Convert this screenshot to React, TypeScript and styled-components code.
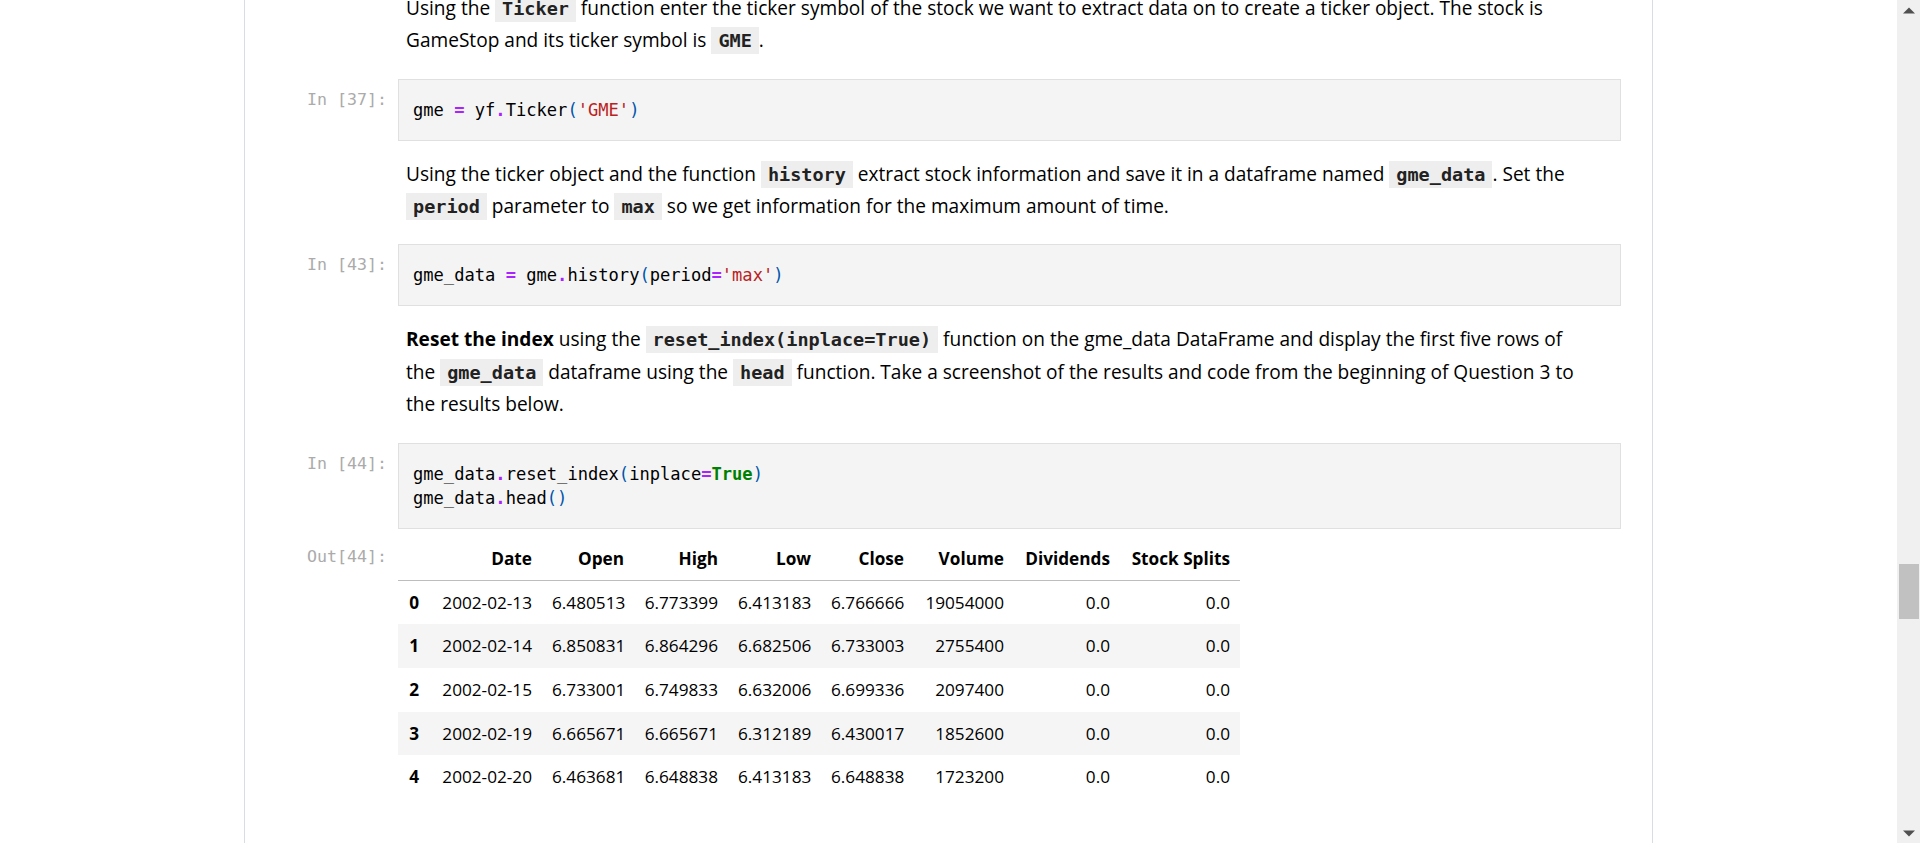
import React from "react";
import styled, { createGlobalStyle } from "styled-components";

const GlobalStyle = createGlobalStyle`
  html, body {
    margin: 0;
    padding: 0;
    height: 100%;
    overflow: hidden;
    background: #ffffff;
  }
  #root { height: 100%; }
`;

const TEXT_FONT = `"Open Sans", "Noto Sans", sans-serif`;
const MONO_FONT = `"DejaVu Sans Mono", "Liberation Mono", monospace`;

const Window = styled.div`
  display: flex;
  width: 100vw;
  height: 100vh;
  overflow: hidden;
`;

const Viewport = styled.div`
  flex: 1;
  min-width: 0;
  display: flex;
  justify-content: center;
  overflow: hidden;
`;

const Notebook = styled.div`
  width: 1409px;
  flex: none;
  box-sizing: border-box;
  border-left: 1px solid #d8dde3;
  border-right: 1px solid #d8dde3;
  padding-right: 31px;
  height: 100%;
`;

const CellList = styled.div<{ $offset: number }>`
  display: flex;
  flex-direction: column;
  margin-top: ${(p) => -p.$offset}px;
`;

const Cell = styled.div<{ $flushTop?: boolean }>`
  display: grid;
  grid-template-columns: 153px 1fr;
  padding: ${(p) => (p.$flushTop ? "0" : "8.5px")} 0 8.5px 0;
`;

const Prompt = styled.div<{ $top: number }>`
  font-family: ${MONO_FONT};
  font-size: 16.6px;
  line-height: 24px;
  color: #ababab;
  text-align: right;
  padding: ${(p) => p.$top}px 11px 0 0;
  white-space: pre;
`;

const Markdown = styled.div`
  font-family: ${TEXT_FONT};
  font-size: 19.1px;
  line-height: 32.4px;
  color: #000;
  padding: 0 8px 5px 8px;
`;

const Para = styled.p`
  margin: 0;
  white-space: nowrap;
`;

const InlineCode = styled.code`
  font-family: ${MONO_FONT};
  font-size: 18.5px;
  line-height: 1;
  font-weight: bold;
  color: #222;
  background: #eeeeee;
  padding: 3px 7px;
`;

const InputArea = styled.div`
  background: #f4f4f4;
  border: 1px solid #e0e0e0;
  padding: 18px 14px;
  font-family: ${MONO_FONT};
  font-size: 17.1px;
  line-height: 24px;
  color: #000;
  white-space: pre;
`;

const CodeLine = styled.div``;

const Op = styled.span`
  color: #aa22ff;
  font-weight: bold;
`;

const Str = styled.span`
  color: #ba2121;
`;

const Kw = styled.span`
  color: #008000;
  font-weight: bold;
`;

const Bracket = styled.span`
  color: #0055aa;
`;

const OutputArea = styled.div`
  display: flex;
`;

const DataTable = styled.table`
  border-collapse: collapse;
  table-layout: fixed;
  width: 842px;
  font-family: ${TEXT_FONT};
  font-size: 17.2px;
  color: #000;
`;

const HeadCell = styled.th`
  text-align: right;
  font-weight: bold;
  padding: 9.5px 10px;
  line-height: 23.6px;
  border-bottom: 1px solid #bdbdbd;
  white-space: nowrap;
`;

const BodyRow = styled.tr<{ $striped: boolean }>`
  background: ${(p) => (p.$striped ? "#f5f5f5" : "transparent")};
`;

const IndexCell = styled.th`
  text-align: right;
  font-weight: bold;
  padding: 10px 10px 10px 0;
  line-height: 23.6px;
`;

const DataCell = styled.td`
  text-align: right;
  padding: 10px 10px;
  line-height: 23.6px;
  white-space: nowrap;
`;

const ScrollBar = styled.div`
  width: 23px;
  flex: none;
  background: #f0f0f0;
  display: flex;
  flex-direction: column;
`;

const ArrowButton = styled.div`
  height: 20px;
  display: flex;
  align-items: center;
  justify-content: center;
  padding-left: 1px;
`;

const Track = styled.div`
  flex: 1;
  padding: 0 1px 0 2px;
`;

const Thumb = styled.div<{ $top: number; $height: number }>`
  margin-top: ${(p) => p.$top}px;
  height: ${(p) => p.$height}px;
  background: #c1c1c1;
`;

const columns = [
  { label: "", width: 31 },
  { label: "Date", width: 113 },
  { label: "Open", width: 92 },
  { label: "High", width: 94 },
  { label: "Low", width: 93 },
  { label: "Close", width: 93 },
  { label: "Volume", width: 100 },
  { label: "Dividends", width: 106 },
  { label: "Stock Splits", width: 120 },
];

const rows = [
  ["2002-02-13", "6.480513", "6.773399", "6.413183", "6.766666", "19054000", "0.0", "0.0"],
  ["2002-02-14", "6.850831", "6.864296", "6.682506", "6.733003", "2755400", "0.0", "0.0"],
  ["2002-02-15", "6.733001", "6.749833", "6.632006", "6.699336", "2097400", "0.0", "0.0"],
  ["2002-02-19", "6.665671", "6.665671", "6.312189", "6.430017", "1852600", "0.0", "0.0"],
  ["2002-02-20", "6.463681", "6.648838", "6.413183", "6.648838", "1723200", "0.0", "0.0"],
];

const UpArrow = () => (
  <svg width="12" height="7" viewBox="0 0 12 7">
    <polygon points="0,6.5 6,0.5 12,6.5" fill="#505050" />
  </svg>
);

const DownArrow = () => (
  <svg width="12" height="7" viewBox="0 0 12 7">
    <polygon points="0,0.5 6,6.5 12,0.5" fill="#505050" />
  </svg>
);

export default function App() {
  return (
    <>
      <GlobalStyle />
      <Window>
        <Viewport>
          <Notebook>
            <CellList $offset={16.7}>
              <Cell>
                <div />
                <Markdown>
                  <Para>
                    Using the <InlineCode>Ticker</InlineCode> function enter the ticker symbol of the stock we want to extract data on to create a ticker object. The stock is
                    <br />
                    GameStop and its ticker symbol is <InlineCode>GME</InlineCode>.
                  </Para>
                </Markdown>
              </Cell>

              <Cell>
                <Prompt $top={9}>In [37]:</Prompt>
                <InputArea>
                  <CodeLine>
                    gme <Op>=</Op> yf<Op>.</Op>Ticker<Bracket>(</Bracket>
                    <Str>'GME'</Str>
                    <Bracket>)</Bracket>
                  </CodeLine>
                </InputArea>
              </Cell>

              <Cell>
                <div />
                <Markdown>
                  <Para>
                    Using the ticker object and the function <InlineCode>history</InlineCode> extract stock information and save it in a dataframe named <InlineCode>gme_data</InlineCode>. Set the
                    <br />
                    <InlineCode>period</InlineCode> parameter to <InlineCode>max</InlineCode> so we get information for the maximum amount of time.
                  </Para>
                </Markdown>
              </Cell>

              <Cell>
                <Prompt $top={9}>In [43]:</Prompt>
                <InputArea>
                  <CodeLine>
                    gme_data <Op>=</Op> gme<Op>.</Op>history<Bracket>(</Bracket>period<Op>=</Op>
                    <Str>'max'</Str>
                    <Bracket>)</Bracket>
                  </CodeLine>
                </InputArea>
              </Cell>

              <Cell>
                <div />
                <Markdown>
                  <Para>
                    <b>Reset the index</b> using the <InlineCode>reset_index(inplace=True)</InlineCode> function on the gme_data DataFrame and display the first five rows of
                    <br />
                    the <InlineCode>gme_data</InlineCode> dataframe using the <InlineCode>head</InlineCode> function. Take a screenshot of the results and code from the beginning of Question 3 to
                    <br />
                    the results below.
                  </Para>
                </Markdown>
              </Cell>

              <Cell>
                <Prompt $top={9}>In [44]:</Prompt>
                <InputArea>
                  <CodeLine>
                    gme_data<Op>.</Op>reset_index<Bracket>(</Bracket>inplace<Op>=</Op>
                    <Kw>True</Kw>
                    <Bracket>)</Bracket>
                  </CodeLine>
                  <CodeLine>
                    gme_data<Op>.</Op>head<Bracket>()</Bracket>
                  </CodeLine>
                </InputArea>
              </Cell>

              <Cell $flushTop>
                <Prompt $top={8}>Out[44]:</Prompt>
                <OutputArea>
                  <DataTable>
                    <colgroup>
                      {columns.map((c, i) => (
                        <col key={i} style={{ width: c.width }} />
                      ))}
                    </colgroup>
                    <thead>
                      <tr>
                        {columns.map((c, i) => (
                          <HeadCell key={i}>{c.label}</HeadCell>
                        ))}
                      </tr>
                    </thead>
                    <tbody>
                      {rows.map((r, i) => (
                        <BodyRow key={i} $striped={i % 2 === 1}>
                          <IndexCell>{i}</IndexCell>
                          {r.map((v, j) => (
                            <DataCell key={j}>{v}</DataCell>
                          ))}
                        </BodyRow>
                      ))}
                    </tbody>
                  </DataTable>
                </OutputArea>
              </Cell>
            </CellList>
          </Notebook>
        </Viewport>
        <ScrollBar>
          <ArrowButton>
            <UpArrow />
          </ArrowButton>
          <Track>
            <Thumb $top={544} $height={55} />
          </Track>
          <ArrowButton>
            <DownArrow />
          </ArrowButton>
        </ScrollBar>
      </Window>
    </>
  );
}
